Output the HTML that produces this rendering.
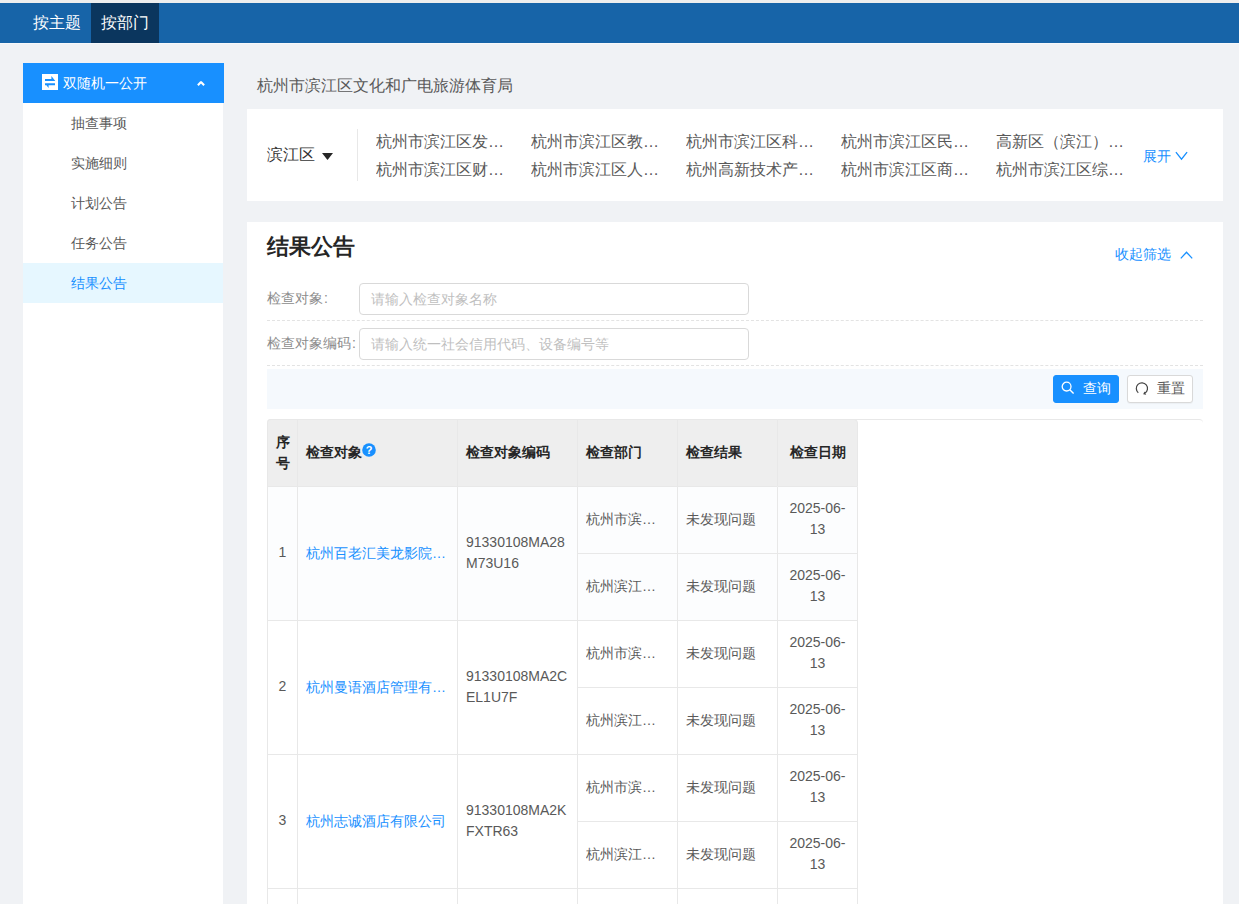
<!DOCTYPE html>
<html><head><meta charset="utf-8">
<style>
*{box-sizing:border-box;margin:0;padding:0}
html,body{width:1239px;height:904px;overflow:hidden}
body{background:#f0f2f5;font-family:"Liberation Sans",sans-serif;font-size:14px;color:#333;position:relative}
.abs{position:absolute}
.topstrip{left:0;top:0;width:1239px;height:3px;background:#eeeeee}
.hdr{left:0;top:3px;width:1239px;height:40px;background:#1764a8}
.hdr .tab{position:absolute;top:0;height:40px;line-height:40px;font-size:16px;color:#fff;padding:0 10px}
.hdr .t1{left:23px}
.hdr .t2{left:91px;background:#0b365e}
.hline{left:0;top:43px;width:1239px;height:1px;background:#f7f8fa}
.side{left:23px;top:63px;width:200px;height:841px;background:#fff}
.side .head{position:absolute;left:0;top:0;width:201px;height:40px;background:#1890ff;color:#fff;font-size:14px;line-height:40px}
.side .item{position:absolute;left:0;width:200px;height:40px;line-height:40px;padding-left:48px;color:#595959;font-size:14px}
.side .sel{background:#e6f7ff;color:#1890ff}

.crumb{left:257px;top:74px;font-size:16px;line-height:24px;color:#595959}
.card1{left:247px;top:109px;width:976px;height:92px;background:#fff}
.area{position:absolute;left:20px;top:34px;font-size:16px;line-height:24px;color:#333}
.vdiv{position:absolute;left:110px;top:20px;width:1px;height:52px;background:#e8e8e8}
.dep{position:absolute;width:135px;font-size:16px;line-height:24px;color:#595959;white-space:nowrap;overflow:hidden;text-overflow:ellipsis}
.expand{position:absolute;left:896px;top:37px;font-size:14px;line-height:20px;color:#1890ff}
.card2{left:247px;top:222px;width:976px;height:682px;background:#fff}
.ttl{position:absolute;left:20px;top:10px;font-size:22px;line-height:30px;font-weight:bold;color:#262626}
.collapse{position:absolute;left:868px;top:22px;font-size:14px;line-height:20px;color:#1890ff}
.lbl{position:absolute;left:20px;font-size:14px;line-height:20px;color:#8c8c8c}
.inp{position:absolute;left:112px;width:390px;height:32px;border:1px solid #d9d9d9;border-radius:4px;padding-left:11px;font-size:14px;line-height:30px;color:#bfbfbf}
.dash{position:absolute;left:20px;width:936px;height:0;border-top:1px dashed #e3e3e3}
.bar{position:absolute;left:20px;top:147px;width:936px;height:40px;background:#f5f9fd}
.btn{position:absolute;top:6px;height:28px;border-radius:3px;font-size:14px;line-height:25px}
.bq{left:786px;width:66px;background:#1890ff;color:#fff;border:1px solid #1890ff}
.br{left:860px;width:66px;background:#fff;color:#595959;border:1px solid #d9d9d9;box-shadow:0 1px 1px rgba(0,0,0,0.04)}

.twrap{left:267px;top:419px;width:936px;height:485px;border-top:1px solid #e8e8e8;border-radius:4px 4px 0 0}
.tbl{left:267px;top:419px;width:591px;height:485px}
.th{position:absolute;top:0;height:68px;background:#eeeeee;border-top:1px solid #e8e8e8;border-left:1px solid #e8e8e8;border-bottom:1px solid #e8e8e8;font-weight:bold;color:#262626;font-size:14px;line-height:21px;display:flex;align-items:center;padding:0 8px 2px}
.td{position:absolute;background:#fff;border-left:1px solid #e8e8e8;border-bottom:1px solid #e8e8e8;font-size:14px;line-height:21px;color:#595959;display:flex;align-items:center;padding:0 8px 2px}
.ell{white-space:nowrap;overflow:hidden;text-overflow:ellipsis;display:block;width:100%}
.lnk{color:#1890ff}
</style></head><body>
<div class="abs topstrip"></div>
<div class="abs hdr">
  <div class="tab t1">按主题</div>
  <div class="tab t2">按部门</div>
</div>
<div class="abs hline"></div>

<div class="abs side">
  <div class="head">
    <svg class="abs" style="left:19px;top:11px" width="16" height="16" viewBox="0 0 16 16"><rect x="0" y="0" width="16" height="16" fill="#fff"/><path d="M3 5H9.4V2L13.3 7H3Z M13 9.3H6.6V14L2.8 9.3H13V11.3H3V9.3Z" fill="#1890ff"/></svg>
    <span class="abs" style="left:40px;top:0">双随机一公开</span>
    <svg class="abs" style="left:172px;top:16px" width="12" height="9" viewBox="0 0 12 9"><path d="M2.9 6.3L6 3.1L9.1 6.3" stroke="#fff" stroke-width="2.1" stroke-linejoin="bevel" fill="none"/></svg>
  </div>
  <div class="item" style="top:40px">抽查事项</div>
  <div class="item" style="top:80px">实施细则</div>
  <div class="item" style="top:120px">计划公告</div>
  <div class="item" style="top:160px">任务公告</div>
  <div class="item sel" style="top:200px">结果公告</div>
</div>


<div class="abs crumb">杭州市滨江区文化和广电旅游体育局</div>
<div class="abs card1">
  <div class="area">滨江区</div>
  <svg class="abs" style="left:75px;top:44px" width="11" height="8" viewBox="0 0 11 8"><path d="M0 0H11L5.5 7Z" fill="#262626"/></svg>
  <div class="vdiv"></div>
  <div class="dep" style="left:129px;top:21px">杭州市滨江区发展和改革局</div>
  <div class="dep" style="left:129px;top:49px">杭州市滨江区财政局</div>
  <div class="dep" style="left:284px;top:21px">杭州市滨江区教育局</div>
  <div class="dep" style="left:284px;top:49px">杭州市滨江区人力资源</div>
  <div class="dep" style="left:439px;top:21px">杭州市滨江区科技局</div>
  <div class="dep" style="left:439px;top:49px">杭州高新技术产业开发区</div>
  <div class="dep" style="left:594px;top:21px">杭州市滨江区民政局</div>
  <div class="dep" style="left:594px;top:49px">杭州市滨江区商务局</div>
  <div class="dep" style="left:749px;top:21px">高新区（滨江）市场监管局</div>
  <div class="dep" style="left:749px;top:49px">杭州市滨江区综合行政执法局</div>
  <div class="expand">展开</div><svg class="abs" style="left:928px;top:42px" width="13" height="10" viewBox="0 0 13 10"><path d="M0.9 1.1L6.5 8.1L12.1 1.1" stroke="#1890ff" stroke-width="1.3" fill="none"/></svg>
</div>
<div class="abs card2">
  <div class="ttl">结果公告</div>
  <div class="collapse">收起筛选</div><svg class="abs" style="left:933px;top:28px" width="13" height="10" viewBox="0 0 13 10"><path d="M0.8 8.4L6.5 2.2L12.2 8.4" stroke="#1890ff" stroke-width="1.3" fill="none"/></svg>
  <div class="lbl" style="top:66px">检查对象<span style="margin-left:1px">:</span></div>
  <div class="inp" style="top:61px">请输入检查对象名称</div>
  <div class="dash" style="top:98px"></div>
  <div class="lbl" style="top:111px">检查对象编码<span style="margin-left:1px">:</span></div>
  <div class="inp" style="top:106px">请输入统一社会信用代码、设备编号等</div>
  <div class="dash" style="top:143px"></div>
  <div class="bar">
    <div class="btn bq"><svg class="abs" style="left:7px;top:5px" width="14" height="14" viewBox="0 0 14 14"><circle cx="5.6" cy="5.6" r="4.4" stroke="#fff" stroke-width="1.3" fill="none"/><path d="M8.8 8.8L12.6 12.6" stroke="#fff" stroke-width="1.4"/></svg><span class="abs" style="left:29px;top:0">查询</span></div>
    <div class="btn br"><svg class="abs" style="left:6px;top:5px" width="15" height="15" viewBox="0 0 15 15"><path d="M4.3 11.7A5.6 5.6 0 1 1 10.95 12.1" stroke="#444" stroke-width="1.2" fill="none"/><path d="M9.2 13.3L12.2 13.8L10.4 10.6Z" fill="#444"/></svg><span class="abs" style="left:29px;top:0">重置</span></div>
  </div>
</div>
<div class="abs twrap"></div>
<div class="abs tbl">
<div class="th" style="left:0px;width:30px;justify-content:center;padding:0;border-top-left-radius:4px;">序<br>号</div>
<div class="th" style="left:30px;width:160px;">检查对象<svg class="abs" style="left:64px;top:23px" width="14" height="14" viewBox="0 0 14 14"><circle cx="7" cy="7" r="6.8" fill="#1890ff"/><text x="7" y="11" font-size="11" font-family="Liberation Sans" fill="#fff" text-anchor="middle">?</text></svg></div>
<div class="th" style="left:190px;width:120px;">检查对象编码</div>
<div class="th" style="left:310px;width:100px;">检查部门</div>
<div class="th" style="left:410px;width:100px;">检查结果</div>
<div class="th" style="left:510px;width:81px;justify-content:center;border-right:1px solid #e8e8e8;border-top-right-radius:4px;">检查日期</div>
<div class="td" style="left:0;top:68px;width:30px;height:134px;justify-content:center;padding:0 0 2px;background:#fcfdfe">1</div>
<div class="td" style="left:30px;top:68px;width:160px;height:134px;padding-bottom:0;background:#fcfdfe"><span class="ell lnk">杭州百老汇美龙影院有限公司</span></div>
<div class="td" style="left:190px;top:68px;width:120px;height:134px;background:#fcfdfe">91330108MA28<br>M73U16</div>
<div class="td" style="left:310px;top:68px;width:100px;height:67px;background:#fcfdfe"><span class="ell">杭州市滨江区文化和广电旅游体育局</span></div>
<div class="td" style="left:410px;top:68px;width:100px;height:67px;background:#fcfdfe">未发现问题</div>
<div class="td" style="left:510px;top:68px;width:81px;height:67px;border-right:1px solid #e8e8e8;justify-content:center;text-align:center;background:#fcfdfe">2025-06-<br>13</div>
<div class="td" style="left:310px;top:135px;width:100px;height:67px;background:#fcfdfe"><span class="ell">杭州滨江区市场监督管理局</span></div>
<div class="td" style="left:410px;top:135px;width:100px;height:67px;background:#fcfdfe">未发现问题</div>
<div class="td" style="left:510px;top:135px;width:81px;height:67px;border-right:1px solid #e8e8e8;justify-content:center;text-align:center;background:#fcfdfe">2025-06-<br>13</div>
<div class="td" style="left:0;top:202px;width:30px;height:134px;justify-content:center;padding:0 0 2px">2</div>
<div class="td" style="left:30px;top:202px;width:160px;height:134px;padding-bottom:0"><span class="ell lnk">杭州曼语酒店管理有限公司</span></div>
<div class="td" style="left:190px;top:202px;width:120px;height:134px">91330108MA2C<br>EL1U7F</div>
<div class="td" style="left:310px;top:202px;width:100px;height:67px"><span class="ell">杭州市滨江区文化和广电旅游体育局</span></div>
<div class="td" style="left:410px;top:202px;width:100px;height:67px">未发现问题</div>
<div class="td" style="left:510px;top:202px;width:81px;height:67px;border-right:1px solid #e8e8e8;justify-content:center;text-align:center">2025-06-<br>13</div>
<div class="td" style="left:310px;top:269px;width:100px;height:67px"><span class="ell">杭州滨江区市场监督管理局</span></div>
<div class="td" style="left:410px;top:269px;width:100px;height:67px">未发现问题</div>
<div class="td" style="left:510px;top:269px;width:81px;height:67px;border-right:1px solid #e8e8e8;justify-content:center;text-align:center">2025-06-<br>13</div>
<div class="td" style="left:0;top:336px;width:30px;height:134px;justify-content:center;padding:0 0 2px">3</div>
<div class="td" style="left:30px;top:336px;width:160px;height:134px;padding-bottom:0"><span class="ell lnk">杭州志诚酒店有限公司</span></div>
<div class="td" style="left:190px;top:336px;width:120px;height:134px">91330108MA2K<br>FXTR63</div>
<div class="td" style="left:310px;top:336px;width:100px;height:67px"><span class="ell">杭州市滨江区文化和广电旅游体育局</span></div>
<div class="td" style="left:410px;top:336px;width:100px;height:67px">未发现问题</div>
<div class="td" style="left:510px;top:336px;width:81px;height:67px;border-right:1px solid #e8e8e8;justify-content:center;text-align:center">2025-06-<br>13</div>
<div class="td" style="left:310px;top:403px;width:100px;height:67px"><span class="ell">杭州滨江区市场监督管理局</span></div>
<div class="td" style="left:410px;top:403px;width:100px;height:67px">未发现问题</div>
<div class="td" style="left:510px;top:403px;width:81px;height:67px;border-right:1px solid #e8e8e8;justify-content:center;text-align:center">2025-06-<br>13</div>
<div class="td" style="left:0;top:470px;width:30px;height:134px;justify-content:center;padding:0 0 2px">4</div>
<div class="td" style="left:30px;top:470px;width:160px;height:134px;padding-bottom:0"><span class="ell lnk">杭州某某有限公司</span></div>
<div class="td" style="left:190px;top:470px;width:120px;height:134px">91330108MA2X<br>XXXXXX</div>
<div class="td" style="left:310px;top:470px;width:100px;height:67px"><span class="ell">杭州市滨江区文化和广电旅游体育局</span></div>
<div class="td" style="left:410px;top:470px;width:100px;height:67px">未发现问题</div>
<div class="td" style="left:510px;top:470px;width:81px;height:67px;border-right:1px solid #e8e8e8;justify-content:center;text-align:center">2025-06-<br>13</div>
<div class="td" style="left:310px;top:537px;width:100px;height:67px"><span class="ell">杭州滨江区市场监督管理局</span></div>
<div class="td" style="left:410px;top:537px;width:100px;height:67px">未发现问题</div>
<div class="td" style="left:510px;top:537px;width:81px;height:67px;border-right:1px solid #e8e8e8;justify-content:center;text-align:center">2025-06-<br>13</div>
</div>
</body></html>
